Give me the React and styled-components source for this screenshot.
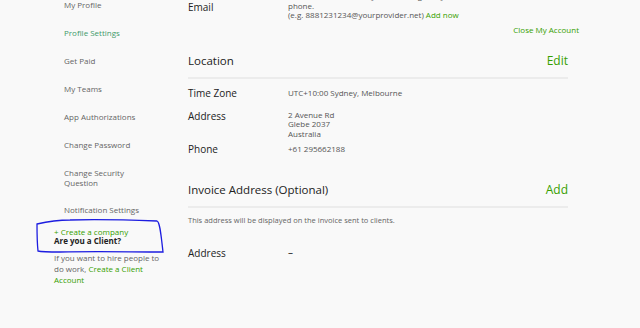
import React from "react";
import styled, { createGlobalStyle } from "styled-components";

const Global = createGlobalStyle`
  html, body { margin: 0; padding: 0; background: #f9f9f9; }
  body { font-family: "Open Sans", "Liberation Sans", sans-serif; color: #222; overflow: hidden; }
`;

const GREEN = "#37a000";

const Page = styled.div`
  display: flex;
  width: 640px;
  height: 328px;
  overflow: hidden;
`;

const Sidebar = styled.aside`
  position: relative;
  width: 188px;
  flex: none;
`;

const Nav = styled.nav`
  display: flex;
  flex-direction: column;
  gap: 18px;
  padding-left: 64px;
`;

const NavItem = styled.a`
  font-size: 8px;
  line-height: ${(p) => (p.$wrap ? 9.5 : 10)}px;
  color: ${(p) => (p.$active ? "#3f9a6a" : "#656565")};
  max-width: 80px;
  text-decoration: none;
`;

const Promo = styled.div`
  padding-left: 54px;
  margin-top: 12px;
  font-size: 8px;
  line-height: 9px;
  width: 110px;
`;

const GreenLink = styled.span`
  color: ${GREEN};
`;

const Strong = styled.div`
  color: #222;
  font-weight: 700;
`;

const Hint = styled.p`
  margin: 7px 0 0;
  color: #656565;
  font-size: 8px;
  line-height: 11px;
`;

const Scribble = styled.svg`
  position: absolute;
  left: 0;
  top: 0;
  pointer-events: none;
`;

const Main = styled.main`
  width: 380px;
  flex: none;
`;

const Row = styled.div`
  display: flex;
  align-items: ${(p) => (p.$top ? "flex-start" : "center")};
  margin-top: ${(p) => p.$mt || 0}px;
`;

const Label = styled.div`
  width: 100px;
  flex: none;
  font-size: 10px;
  line-height: 12px;
  color: #222;
  padding-top: ${(p) => p.$pt || 0}px;
`;

const Value = styled.div`
  font-size: 8px;
  line-height: 9.5px;
  color: ${(p) => (p.$dark ? "#222" : "#555")};
`;

const CloseRow = styled.div`
  display: flex;
  justify-content: flex-end;
  margin-right: -11px;
  margin-top: 5px;
  font-size: 8px;
  line-height: 10px;
`;

const Header = styled.div`
  display: flex;
  justify-content: space-between;
  align-items: center;
  margin-top: ${(p) => p.$mt}px;
  padding-bottom: 9px;
  border-bottom: 2px solid #ececec;
  font-size: 11.5px;
  line-height: 14px;
  color: #222;
`;

const HeaderAction = styled.span`
  color: ${GREEN};
  font-size: 12px;
`;

const Note = styled.div`
  margin-top: 7px;
  font-size: 7.5px;
  line-height: 10px;
  color: #656565;
`;

const EmailBlock = styled.div`
  margin-top: -9px;
`;

export default function App() {
  const nav = [
    "My Profile",
    "Profile Settings",
    "Get Paid",
    "My Teams",
    "App Authorizations",
    "Change Password",
    "Change Security Question",
    "Notification Settings",
  ];
  return (
    <>
      <Global />
      <Page>
        <Sidebar>
          <Nav>
            {nav.map((n) => (
              <NavItem
                key={n}
                $active={n === "Profile Settings"}
                $wrap={n === "Change Security Question"}
              >
                {n}
              </NavItem>
            ))}
          </Nav>
          <Promo>
            <GreenLink>+ Create a company</GreenLink>
            <Strong>Are you a Client?</Strong>
            <Hint>
              If you want to hire people to do work, <GreenLink>Create a Client Account</GreenLink>
            </Hint>
          </Promo>
          <Scribble width="188" height="328" viewBox="0 0 188 328">
            <path
              d="M37 224 C 50 221, 60 220, 70 220 C 100 219, 130 220, 157 221 C 160 222, 161 235, 163 252 C 130 252, 100 251, 60 252 C 50 252, 42 252, 38 251 C 37 242, 37 232, 37 224 Z"
              fill="none"
              stroke="#1d1de0"
              strokeWidth="1.3"
            />
          </Scribble>
        </Sidebar>
        <Main>
          <EmailBlock>
            <Row $top>
              <Label $pt={9.5}>Email</Label>
              <Value>
                Receive notifications by text message on your mobile
                <br />
                phone.
                <br />
                (e.g. 8881231234@yourprovider.net) <GreenLink>Add now</GreenLink>
              </Value>
            </Row>
          </EmailBlock>
          <CloseRow>
            <GreenLink>Close My Account</GreenLink>
          </CloseRow>
          <Header $mt={19}>
            <span>Location</span>
            <HeaderAction>Edit</HeaderAction>
          </Header>
          <Row $mt={8}>
            <Label>Time Zone</Label>
            <Value>UTC+10:00 Sydney, Melbourne</Value>
          </Row>
          <Row $top $mt={11}>
            <Label>Address</Label>
            <Value>
              2 Avenue Rd
              <br />
              Glebe 2037
              <br />
              Australia
            </Value>
          </Row>
          <Row $mt={5}>
            <Label>Phone</Label>
            <Value>+61 295662188</Value>
          </Row>
          <Header $mt={28}>
            <span>Invoice Address (Optional)</span>
            <HeaderAction>Add</HeaderAction>
          </Header>
          <Note>This address will be displayed on the invoice sent to clients.</Note>
          <Row $mt={22}>
            <Label>Address</Label>
            <Value $dark style={{ fontSize: 10 }}>–</Value>
          </Row>
        </Main>
      </Page>
    </>
  );
}
